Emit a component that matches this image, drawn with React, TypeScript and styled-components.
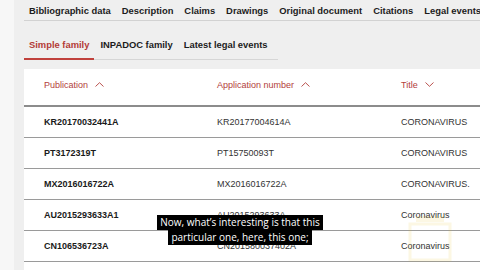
import React from "react";
import styled, { createGlobalStyle } from "styled-components";

const GlobalStyle = createGlobalStyle`
    html, body {
        margin: 0;
        padding: 0;
        width: 480px;
        height: 270px;
        overflow: hidden;
        background: #efefef;
        font-family: "Liberation Sans", Arial, sans-serif;
    }
`;

const Page = styled.div`
    display: flex;
    width: 480px;
    height: 270px;
    position: relative;
    overflow: hidden;
`;

const Strip = styled.div`
    width: 14px;
    flex: none;
    background: #f7f7f7;
`;

const Main = styled.div`
    flex: 1;
    padding-left: 10px;
    display: flex;
    flex-direction: column;
    min-width: 0;
`;

const TopNav = styled.div`
    display: flex;
    gap: 11px;
    height: 20px;
    align-items: center;
    padding-left: 5px;
    border-bottom: 1px solid #d2d2d2;
    white-space: nowrap;
`;

const NavItem = styled.span`
    font-size: 9.4px;
    font-weight: bold;
    color: #1c1c1c;
`;

const SubTabs = styled.div`
    display: flex;
    align-self: flex-start;
    margin-top: 18px;
    border-bottom: 1px solid #d6d6d6;
    padding-right: 4px;
`;

const SubTab = styled.span<{ $active?: boolean }>`
    font-size: 9.4px;
    font-weight: bold;
    color: ${(p) => (p.$active ? "#b33a36" : "#1c1c1c")};
    padding: 0 5px 8px 5px;
    margin-right: 1px;
    border-bottom: 2px solid ${(p) => (p.$active ? "#c0413c" : "transparent")};
    margin-bottom: -1px;
`;

const Card = styled.div`
    background: #fff;
    margin-top: 9px;
    flex: 1;
`;

const Row = styled.div<{ $head?: boolean }>`
    display: grid;
    grid-template-columns: 173px 184px 1fr;
    align-items: center;
    box-sizing: border-box;
    height: ${(p) => (p.$head ? "38px" : "31px")};
    padding-bottom: ${(p) => (p.$head ? "5px" : "0")};
    border-bottom: ${(p) => (p.$head ? "2px solid #8c8c8c" : "1.5px solid #9a9a9a")};
    padding-left: 20px;
    white-space: nowrap;
`;

const HeadCell = styled.span`
    font-size: 9px;
    color: #b2403b;
    display: flex;
    align-items: center;
    gap: 7px;
`;

const Cell = styled.span<{ $bold?: boolean }>`
    font-size: 9px;
    font-weight: ${(p) => (p.$bold ? "bold" : "normal")};
    color: ${(p) => (p.$bold ? "#1a1a1a" : "#333")};
`;

const Caption = styled.div`
    position: absolute;
    left: 0;
    right: 0;
    top: 215px;
    display: flex;
    flex-direction: column;
    align-items: center;
    font-family: "Open Sans", sans-serif;
    font-size: 10px;
    line-height: 13px;
    color: #fff;
`;

const CaptionLine = styled.span`
    background: #000;
    padding: 1px 3px;
`;

const Watermark = styled.svg`
    position: absolute;
    left: 402px;
    top: 214px;
    opacity: 0.12;
`;

const Chevron = ({ up }: { up?: boolean }) => (
    <svg width="9" height="5" viewBox="0 0 9 5" fill="none" stroke="#b2403b" strokeWidth="0.9">
        {up ? <polyline points="0.5,4.5 4.5,0.7 8.5,4.5" /> : <polyline points="0.5,0.5 4.5,4.3 8.5,0.5" />}
    </svg>
);

const rows = [
    ["KR20170032441A", "KR20177004614A", "CORONAVIRUS"],
    ["PT3172319T", "PT15750093T", "CORONAVIRUS"],
    ["MX2016016722A", "MX2016016722A", "CORONAVIRUS."],
    ["AU2015293633A1", "AU2015293633A", "Coronavirus"],
    ["CN106536723A", "CN201580037402A", "Coronavirus"],
];

export default function App() {
    return (
        <Page>
            <GlobalStyle />
            <Strip />
            <Main>
                <TopNav>
                    <NavItem>Bibliographic data</NavItem>
                    <NavItem>Description</NavItem>
                    <NavItem>Claims</NavItem>
                    <NavItem>Drawings</NavItem>
                    <NavItem>Original document</NavItem>
                    <NavItem>Citations</NavItem>
                    <NavItem>Legal events</NavItem>
                </TopNav>
                <SubTabs>
                    <SubTab $active>Simple family</SubTab>
                    <SubTab>INPADOC family</SubTab>
                    <SubTab>Latest legal events</SubTab>
                </SubTabs>
                <Card>
                    <Row $head>
                        <HeadCell>
                            Publication <Chevron up />
                        </HeadCell>
                        <HeadCell>
                            Application number <Chevron up />
                        </HeadCell>
                        <HeadCell>
                            Title <Chevron />
                        </HeadCell>
                    </Row>
                    {rows.map((r) => (
                        <Row key={r[0]}>
                            <Cell $bold>{r[0]}</Cell>
                            <Cell>{r[1]}</Cell>
                            <Cell>{r[2]}</Cell>
                        </Row>
                    ))}
                </Card>
            </Main>
            <Caption>
                <CaptionLine>Now, what’s interesting is that this</CaptionLine>
                <CaptionLine>particular one, here, this one;</CaptionLine>
            </Caption>
            <Watermark width="56" height="50" viewBox="0 0 56 50">
                <rect x="8" y="10" width="40" height="36" fill="none" stroke="#e8c020" strokeWidth="3" />
                <rect x="14" y="2" width="28" height="6" fill="#e8c020" />
            </Watermark>
        </Page>
    );
}
